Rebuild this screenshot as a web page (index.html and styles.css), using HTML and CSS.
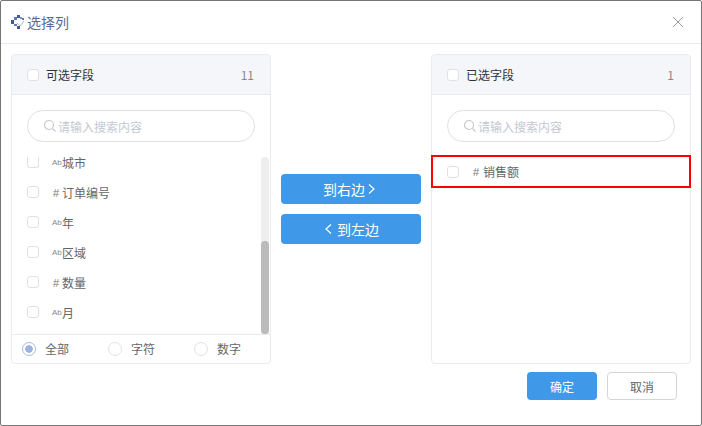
FILE: index.html
```html
<!DOCTYPE html>
<html lang="zh-CN">
<head>
    <meta charset="UTF-8">
    <title>选择列</title>
    <link rel="stylesheet" href="styles.css">
</head>
<body>
    <div class="dialog">
        <div class="dialog-header">
            <svg class="logo" width="16" height="16" viewBox="0 0 16 16">
                <g fill="#3f5a9a">
                    <rect x="7" y="1" width="3" height="3"/>
                    <rect x="4" y="3" width="3" height="3" fill="#5f78b0"/>
                    <rect x="10" y="3" width="2" height="2" fill="#7f93c0"/>
                    <rect x="12" y="4" width="2" height="2" fill="#5f78b0"/>
                    <rect x="1" y="6" width="3" height="4"/>
                    <rect x="4" y="10" width="3" height="2" fill="#5f78b0"/>
                    <rect x="7" y="12" width="3" height="3"/>
                </g>
                <path d="M7 9 L10 12 L14 7" fill="none" stroke="#a9b8d6" stroke-width="1"/>
            </svg>
            <span class="dialog-title">选择列</span>
            <svg class="close" width="12" height="12" viewBox="0 0 12 12">
                <path d="M1 1 L11 11 M11 1 L1 11" stroke="#9a9a9a" stroke-width="1" fill="none"/>
            </svg>
        </div>

        <div class="dialog-body">
            <!-- left panel -->
            <div class="panel">
                <div class="panel-header">
                    <span class="checkbox"></span>
                    <span class="panel-title">可选字段</span>
                    <span class="panel-count">11</span>
                </div>
                <div class="search">
                    <svg width="14" height="14" viewBox="0 0 14 14">
                        <circle cx="6" cy="6" r="4.5" stroke="#c4c8d2" stroke-width="1.2" fill="none"/>
                        <path d="M9.5 9.5 L12.5 12.5" stroke="#c4c8d2" stroke-width="1.2"/>
                    </svg>
                    <span>请输入搜索内容</span>
                </div>
                <div class="list-wrap">
                    <div class="list">
                        <div class="row"><span class="checkbox"></span><span class="type-ab">Ab</span><span class="name">城市</span></div>
                        <div class="row"><span class="checkbox"></span><span class="type-num">#</span><span class="name">订单编号</span></div>
                        <div class="row"><span class="checkbox"></span><span class="type-ab">Ab</span><span class="name">年</span></div>
                        <div class="row"><span class="checkbox"></span><span class="type-ab">Ab</span><span class="name">区域</span></div>
                        <div class="row"><span class="checkbox"></span><span class="type-num">#</span><span class="name">数量</span></div>
                        <div class="row"><span class="checkbox"></span><span class="type-ab">Ab</span><span class="name">月</span></div>
                    </div>
                    <div class="scrollbar"><div class="scroll-thumb"></div></div>
                </div>
                <div class="filter">
                    <div class="radio-item"><span class="radio checked"></span>全部</div>
                    <div class="radio-item"><span class="radio"></span>字符</div>
                    <div class="radio-item"><span class="radio"></span>数字</div>
                </div>
            </div>

            <!-- move buttons -->
            <div class="transfer">
                <div class="btn-move btn-right">到右边
                    <svg width="7" height="10" viewBox="0 0 7 10"><path d="M1 .5 L6 5 L1 9.5" stroke="#fff" stroke-width="1.2" fill="none"/></svg>
                </div>
                <div class="btn-move btn-left">
                    <svg width="7" height="10" viewBox="0 0 7 10"><path d="M6 .5 L1 5 L6 9.5" stroke="#fff" stroke-width="1.2" fill="none"/></svg>
                    到左边</div>
            </div>

            <!-- right panel -->
            <div class="panel">
                <div class="panel-header">
                    <span class="checkbox"></span>
                    <span class="panel-title">已选字段</span>
                    <span class="panel-count">1</span>
                </div>
                <div class="search">
                    <svg width="14" height="14" viewBox="0 0 14 14">
                        <circle cx="6" cy="6" r="4.5" stroke="#c4c8d2" stroke-width="1.2" fill="none"/>
                        <path d="M9.5 9.5 L12.5 12.5" stroke="#c4c8d2" stroke-width="1.2"/>
                    </svg>
                    <span>请输入搜索内容</span>
                </div>
                <div class="selected-row">
                    <span class="checkbox"></span><span class="type-num">#</span><span class="name">销售额</span>
                </div>
            </div>
        </div>

        <div class="dialog-footer">
            <div class="btn btn-primary">确定</div>
            <div class="btn btn-default">取消</div>
        </div>
    </div>
</body>
</html>
```

FILE: styles.css
```css
* {
    margin: 0;
    padding: 0;
    box-sizing: border-box;
}

body {
    width: 702px;
    height: 426px;
    overflow: hidden;
    font-family: "Noto Sans CJK SC", "Liberation Sans", sans-serif;
    background: #fff;
}

.dialog {
    width: 702px;
    height: 426px;
    border: 1px solid #767676;
    border-radius: 2px;
    display: flex;
    flex-direction: column;
    background: #fff;
}

.dialog-header {
    height: 43px;
    flex: none;
    display: flex;
    align-items: center;
    padding: 0 17px 0 9px;
    border-bottom: 1px solid #e9ebf0;
}

.logo {
    margin-right: 1px;
}

.dialog-title {
    font-size: 14px;
    color: #5b6b8f;
}

.close {
    margin-left: auto;
}

.dialog-body {
    display: flex;
    padding: 10px 10px 0;
    height: 320px;
    flex: none;
}

.panel {
    width: 260px;
    height: 310px;
    border: 1px solid #e9ebf0;
    border-radius: 4px;
    display: flex;
    flex-direction: column;
}

.panel-header {
    height: 40px;
    flex: none;
    display: flex;
    align-items: center;
    padding: 0 16px 0 15px;
    background: #f4f6fa;
    border-bottom: 1px solid #e9ebf0;
    border-radius: 4px 4px 0 0;
}

.checkbox {
    width: 12px;
    height: 12px;
    flex: none;
    border: 1px solid #dfe1ea;
    border-radius: 3px;
    background: #fff;
}

.panel-title {
    margin-left: 7px;
    font-size: 12px;
    color: #333;
}

.panel-count {
    margin-left: auto;
    font-size: 12px;
    color: #888;
}

.search {
    height: 32px;
    flex: none;
    margin: 15px 15px 0;
    padding-left: 15px;
    display: flex;
    align-items: center;
    gap: 1px;
    border: 1px solid #dfe1ea;
    border-radius: 16px;
    font-size: 12px;
    color: #c4c8d2;
}

.list-wrap {
    display: flex;
    flex: 1;
    margin-top: 11px;
    overflow: hidden;
}

.list {
    flex: 1;
    margin-top: -6px;
}

.row {
    height: 30px;
    padding-left: 15px;
    display: flex;
    align-items: center;
    line-height: 1;
}

/* first row is scrolled partly out of view */
.row:first-child .checkbox {
    height: 11px;
    margin-top: 1px;
    border-top: none;
    border-radius: 0 0 3px 3px;
}

.row .name,
.row .type-ab,
.row .type-num {
    margin-top: 2px;
}

.type-ab {
    width: 10px;
    margin-left: 13px;
    font-family: "Liberation Sans", sans-serif;
    font-size: 8px;
    color: #888;
}

.type-num {
    width: 9px;
    margin-left: 14px;
    font-family: "Liberation Sans", sans-serif;
    font-size: 11px;
    color: #777;
}

.name {
    font-size: 12px;
    color: #666;
}

.scrollbar {
    width: 8px;
    margin: 4px 1px 0 0;
    background: #eeeeef;
    border-radius: 4px 4px 0 0;
    display: flex;
    flex-direction: column;
    justify-content: flex-end;
}

.scroll-thumb {
    height: 93px;
    background: #bbbbbb;
    border-radius: 4px;
}

.filter {
    height: 29px;
    flex: none;
    display: flex;
    align-items: center;
    padding: 0 0 1px 10px;
    border-top: 1px solid #e9ebf0;
}

.radio-item {
    width: 86px;
    flex: none;
    display: flex;
    align-items: center;
    gap: 9px;
    font-size: 12px;
    color: #666;
}

.radio {
    width: 14px;
    height: 14px;
    flex: none;
    border: 1px solid #e0e2ea;
    border-radius: 50%;
    background: #fff;
}

.radio.checked {
    border-color: #a6bbe2;
    background: radial-gradient(circle, #9db2dc 0 3.5px, #fff 4px);
}

.transfer {
    width: 160px;
    padding: 120px 10px 0;
    display: flex;
    flex-direction: column;
    gap: 10px;
}

.btn-move {
    height: 30px;
    display: flex;
    align-items: center;
    justify-content: center;
    background: #3f99e8;
    border-radius: 4px;
    font-size: 14px;
    color: #fff;
}

.btn-right {
    gap: 3px;
    padding-right: 4px;
}

.btn-left {
    gap: 5px;
    padding-left: 2px;
}

.selected-row {
    height: 33px;
    margin: 13px -1px 0;
    padding-left: 14px;
    display: flex;
    align-items: center;
    border: 2px solid #f00;
}

.selected-row .type-num {
    width: 10px;
}

.dialog-footer {
    display: flex;
    justify-content: flex-end;
    gap: 10px;
    padding: 8px 24px 0 0;
}

.btn {
    width: 70px;
    height: 28px;
    display: flex;
    align-items: center;
    justify-content: center;
    border-radius: 4px;
    font-size: 12px;
}

.btn-primary {
    background: #3f99e8;
    color: #fff;
}

.btn-default {
    border: 1px solid #d5d5d5;
    color: #666;
}
```
